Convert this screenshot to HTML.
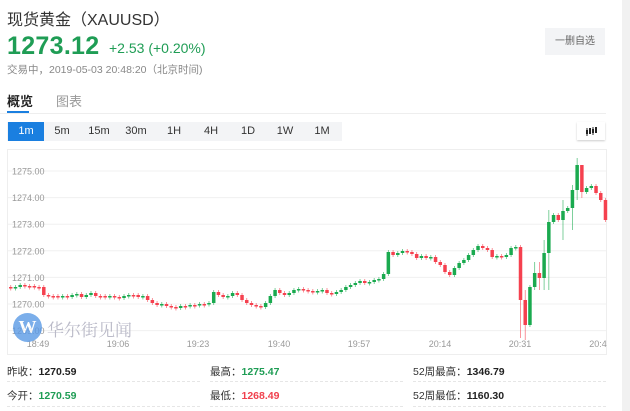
<!DOCTYPE html>
<html><head><meta charset="utf-8">
<style>
*{margin:0;padding:0;box-sizing:border-box}
body{width:630px;height:411px;overflow:hidden;background:#fff;font-family:"Liberation Sans","Noto Sans CJK SC",sans-serif;position:relative;color:#333}
.a{position:absolute;white-space:nowrap}
.g{color:#1f9d55}.r{color:#f0404d}
.per{position:absolute;top:122px;height:19px;font-size:11px;line-height:19px;text-align:center;color:#333;width:36px}
</style></head><body>
<div class="a" style="left:7px;top:6px;font-size:16px;color:#333">现货黄金（XAUUSD）</div>
<div class="a g" style="left:7px;top:32px;font-size:25px;font-weight:bold;letter-spacing:0.3px">1273.12</div>
<div class="a g" style="left:109px;top:40px;font-size:14px">+2.53 (+0.20%)</div>
<div class="a" style="left:7px;top:62px;font-size:10.5px;color:#888">交易中，2019-05-03 20:48:20（北京时间)</div>
<div class="a" style="left:545px;top:28px;width:60px;height:27px;background:#f3f4f6;font-size:10px;line-height:27px;text-align:center;color:#666">一删自选</div>
<div class="a" style="left:7px;top:91px;font-size:13px;font-weight:bold;color:#222">概览</div>
<div class="a" style="left:56px;top:91px;font-size:13px;color:#999">图表</div>
<div class="a" style="left:7px;top:111px;width:22px;height:2px;background:#1a7fe0"></div>
<div class="a" style="left:0;top:113px;width:606px;height:1px;background:#eee"></div>
<div class="a" style="left:7px;top:122px;width:335px;height:19px;background:#f3f4f6"></div>
<div class="a" style="left:8px;top:122px;width:36px;height:19px;background:#1a7fe0"></div>
<div class="per" style="left:8px;color:#fff">1m</div>
<div class="per" style="left:44px">5m</div>
<div class="per" style="left:81px">15m</div>
<div class="per" style="left:118px">30m</div>
<div class="per" style="left:156px">1H</div>
<div class="per" style="left:193px">4H</div>
<div class="per" style="left:230px">1D</div>
<div class="per" style="left:267px">1W</div>
<div class="per" style="left:304px">1M</div>
<div class="a" style="left:577px;top:122px;width:28px;height:18px;background:#fff;box-shadow:0 1px 2px rgba(0,0,0,.2)">
<svg width="28" height="18"><g stroke="#222"><line x1="10" x2="10" y1="6" y2="14" stroke-width="1"/><line x1="10" x2="10" y1="8" y2="12" stroke-width="2"/><line x1="13" x2="13" y1="6" y2="12" stroke-width="2"/><line x1="16" x2="16" y1="5" y2="13" stroke-width="1"/><line x1="16" x2="16" y1="7" y2="11" stroke-width="2"/><line x1="19" x2="19" y1="5" y2="11" stroke-width="2"/></g></svg></div>
<div class="a" style="left:7px;top:149px;width:600px;height:206px;border:1px solid #eee"></div>
<div class="a" style="left:622px;top:0;width:8px;height:411px;background:#f1f1f1"></div>
<svg class="a" style="left:0;top:0" width="630" height="411" id="ch"></svg>
<div class="a" style="left:13px;top:313px;width:29px;height:29px;border-radius:50%;background:#5b9ae6;opacity:.8;color:#fff;font:bold 18px 'Liberation Serif',serif;text-align:center;line-height:29px">W</div>
<div class="a" style="left:47px;top:316px;font-size:17px;color:#aab;font-family:'Liberation Serif','Noto Serif CJK SC',serif;opacity:.8">华尔街见闻</div>
<div class="a" style="left:7px;top:364px;font-size:10.5px">昨收：<b style="color:#222">1270.59</b></div>
<div class="a" style="left:7px;top:388px;font-size:10.5px">今开：<b class="g">1270.59</b></div>
<div class="a" style="left:210px;top:364px;font-size:10.5px">最高：<b class="g">1275.47</b></div>
<div class="a" style="left:210px;top:388px;font-size:10.5px">最低：<b class="r">1268.49</b></div>
<div class="a" style="left:413px;top:364px;font-size:10.5px">52周最高：<b style="color:#222">1346.79</b></div>
<div class="a" style="left:413px;top:388px;font-size:10.5px">52周最低：<b style="color:#222">1160.30</b></div>
<div class="a" style="left:7px;top:381px;width:193px;border-top:1px dashed #e6e6e6"></div>
<div class="a" style="left:210px;top:381px;width:193px;border-top:1px dashed #e6e6e6"></div>
<div class="a" style="left:413px;top:381px;width:193px;border-top:1px dashed #e6e6e6"></div>
<div class="a" style="left:7px;top:406px;width:193px;border-top:1px dashed #e6e6e6"></div>
<div class="a" style="left:210px;top:406px;width:193px;border-top:1px dashed #e6e6e6"></div>
<div class="a" style="left:413px;top:406px;width:193px;border-top:1px dashed #e6e6e6"></div>
<script>
(function(){
var s='';
var labels=['1275.00','1274.00','1273.00','1272.00','1271.00','1270.00','1269.00'];
for(var i=0;i<7;i++){var y=171+i*26.6;
s+='<line x1="8" x2="606" y1="'+y+'" y2="'+y+'" stroke="#f0f0f0"/>';
s+='<text x="12" y="'+(y+3.5)+'" font-size="9" fill="#999" font-family="Liberation Sans">'+labels[i]+'</text>';}
var t=['18:49','19:06','19:23','19:40','19:57','20:14','20:31','20:4'],tx=[38,118,198,279,359,440,520,598];
for(i=0;i<8;i++)s+='<text x="'+tx[i]+'" y="347" text-anchor="middle" font-size="9" fill="#999" font-family="Liberation Sans">'+t[i]+'</text>';
var c=[288,287,285,286,286,287,287,295,296,296,297,296,297,295,294,297,295,293,296,296,297,296,297,298,296,295,295,297,296,300,303,305,304,306,307,308,306,306,305,305,304,304,303,292,295,297,296,293,295,300,303,305,306,307,303,296,290,293,295,293,290,289,290,291,292,291,290,293,294,292,290,287,285,283,281,283,282,280,279,274,252,255,253,251,252,254,258,256,258,257,262,265,272,275,268,263,260,255,250,246,248,250,257,256,257,255,248,247,300,325,287,273,278,253,222,215,220,211,208,190,165,192,188,186,193,200,220];
var wk={108:[245,338],109:[290,340],113:[240,290],114:[210,290],111:[262,290],112:[262,290],120:[158,200],119:[185,230],117:[200,240],121:[178,198]};
var o=287;
for(i=0;i<c.length;i++){var x=(9+i*4.72+1.75).toFixed(2),cl=c[i];var up=cl<o;var col=up?'#1aaa4f':'#f5414f';
var tp=Math.min(o,cl),h=Math.max(1.5,Math.abs(cl-o));
var w=wk[i]||[tp-2,tp+h+2];
s+='<line x1="'+x+'" x2="'+x+'" y1="'+w[0]+'" y2="'+w[1]+'" stroke="'+col+'" stroke-width="0.8" opacity="0.7"/>';
s+='<line x1="'+x+'" x2="'+x+'" y1="'+tp+'" y2="'+(tp+h)+'" stroke="'+col+'" stroke-width="3.5"/>';o=cl;}
document.getElementById('ch').innerHTML=s;
})();
</script>
</body></html>
